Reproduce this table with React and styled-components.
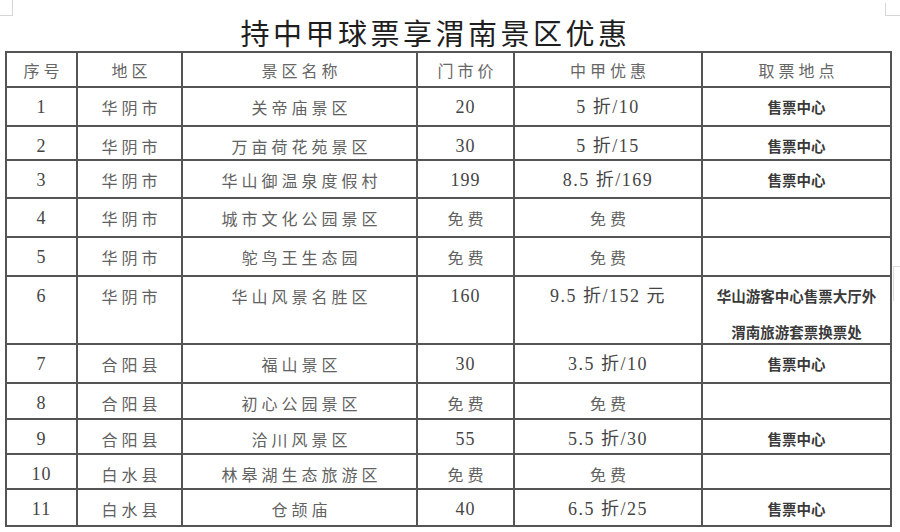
import styled, { createGlobalStyle } from 'styled-components';

const GlobalStyle = createGlobalStyle`
	html, body {
		margin: 0;
		padding: 0;
		background: #fff;
	}
	body {
		font-family: 'Noto Sans CJK SC', 'Noto Sans', sans-serif;
	}
`;

const columns = '71px 105px 235px 97px 188px 189px';

const rows = [
	{ no: '1', area: '华阴市', name: '关帝庙景区', price: '20', deal: '5 折/10', place: ['售票中心'], h: 39 },
	{ no: '2', area: '华阴市', name: '万亩荷花苑景区', price: '30', deal: '5 折/15', place: ['售票中心'], h: 34 },
	{ no: '3', area: '华阴市', name: '华山御温泉度假村', price: '199', deal: '8.5 折/169', place: ['售票中心'], h: 38 },
	{ no: '4', area: '华阴市', name: '城市文化公园景区', price: '免费', deal: '免费', place: [], h: 39 },
	{ no: '5', area: '华阴市', name: '鸵鸟王生态园', price: '免费', deal: '免费', place: [], h: 39 },
	{ no: '6', area: '华阴市', name: '华山风景名胜区', price: '160', deal: '9.5 折/152 元', place: ['华山游客中心售票大厅外', '渭南旅游套票换票处'], h: 68 },
	{ no: '7', area: '合阳县', name: '福山景区', price: '30', deal: '3.5 折/10', place: ['售票中心'], h: 39 },
	{ no: '8', area: '合阳县', name: '初心公园景区', price: '免费', deal: '免费', place: [], h: 36 },
	{ no: '9', area: '合阳县', name: '洽川风景区', price: '55', deal: '5.5 折/30', place: ['售票中心'], h: 35 },
	{ no: '10', area: '白水县', name: '林皋湖生态旅游区', price: '免费', deal: '免费', place: [], h: 35 },
	{ no: '11', area: '白水县', name: '仓颉庙', price: '40', deal: '6.5 折/25', place: ['售票中心'], h: 37 },
];

const isCjk = (s) => /^[\u4e00-\u9fff]+$/.test(s);

const App = () => {
	return (
		<>
			<GlobalStyle />
			<Page>
				<CornerMark $side='left' />
				<CornerMark $side='right' />
				<SideMark />
				<Title>持中甲球票享渭南景区优惠</Title>
				<Table>
					<Row $h={35}>
						<HeadCell>序号</HeadCell>
						<HeadCell>地区</HeadCell>
						<HeadCell>景区名称</HeadCell>
						<HeadCell>门市价</HeadCell>
						<HeadCell>中甲优惠</HeadCell>
						<HeadCell>取票地点</HeadCell>
					</Row>
					{rows.map((r) => (
						<Row key={r.no} $h={r.h}>
							<NumCell>{r.no}</NumCell>
							<TextCell>{r.area}</TextCell>
							<TextCell>{r.name}</TextCell>
							{isCjk(r.price) ? <TextCell>{r.price}</TextCell> : <NumCell>{r.price}</NumCell>}
							{isCjk(r.deal) ? <TextCell>{r.deal}</TextCell> : <NumCell $wide>{r.deal}</NumCell>}
							<PlaceCell>
								{r.place.map((p) => (
									<div key={p}>{p}</div>
								))}
							</PlaceCell>
						</Row>
					))}
				</Table>
			</Page>
		</>
	);
};

const Page = styled.div`
	position: relative;
	width: 900px;
	height: 532px;
	padding: 0 0 0 5px;
	box-sizing: border-box;
	overflow: hidden;
`;

const CornerMark = styled.div`
	position: absolute;
	top: 0;
	width: 12px;
	height: 15px;
	border-bottom: 1px solid #d6d6d6;
	${(p) => (p.$side === 'left' ? 'left: 0; border-right: 1px solid #d6d6d6;' : 'right: 0; top: 3px; height: 12px; width: 14px; border-left: 1px solid #d6d6d6;')}
`;

const SideMark = styled.div`
	position: absolute;
	right: 0;
	top: 266px;
	width: 6px;
	height: 34px;
	border-left: 1px solid #dcdcdc;
	border-top: 1px solid #dcdcdc;
`;

const Title = styled.div`
	width: 887px;
	height: 51px;
	box-sizing: border-box;
	padding: 14px 26px 0 0;
	text-align: center;
	font-size: 29px;
	line-height: 36px;
	letter-spacing: 3.5px;
	color: #1e1e1e;
`;

const Table = styled.div`
	width: 887px;
	border-top: 2px solid #555;
	border-left: 2px solid #555;
	box-sizing: border-box;
`;

const Row = styled.div`
	display: grid;
	grid-template-columns: ${columns};
	height: ${(p) => p.$h}px;
	border-bottom: 2px solid #555;
	box-sizing: border-box;
`;

const Cell = styled.div`
	border-right: 2px solid #555;
	box-sizing: border-box;
	text-align: center;
	overflow: hidden;
	white-space: nowrap;
	padding-top: 8px;
	line-height: 22px;
`;

const HeadCell = styled(Cell)`
	font-size: 16px;
	letter-spacing: 4px;
	text-indent: 4px;
	color: #666;
	padding-top: 6px;
`;

const TextCell = styled(Cell)`
	font-size: 16px;
	letter-spacing: 4px;
	text-indent: 4px;
	color: #626262;
`;

const NumCell = styled(Cell)`
	font-family: 'Liberation Serif', 'Noto Sans CJK SC', serif;
	font-size: 18px;
	letter-spacing: ${(p) => (p.$wide ? '1.5px' : '1px')};
	color: #454545;
`;

const PlaceCell = styled(Cell)`
	font-size: 14.5px;
	font-weight: 700;
	color: #3a3a3a;
	line-height: 36px;
	padding-top: 1px;
`;

export default App;
